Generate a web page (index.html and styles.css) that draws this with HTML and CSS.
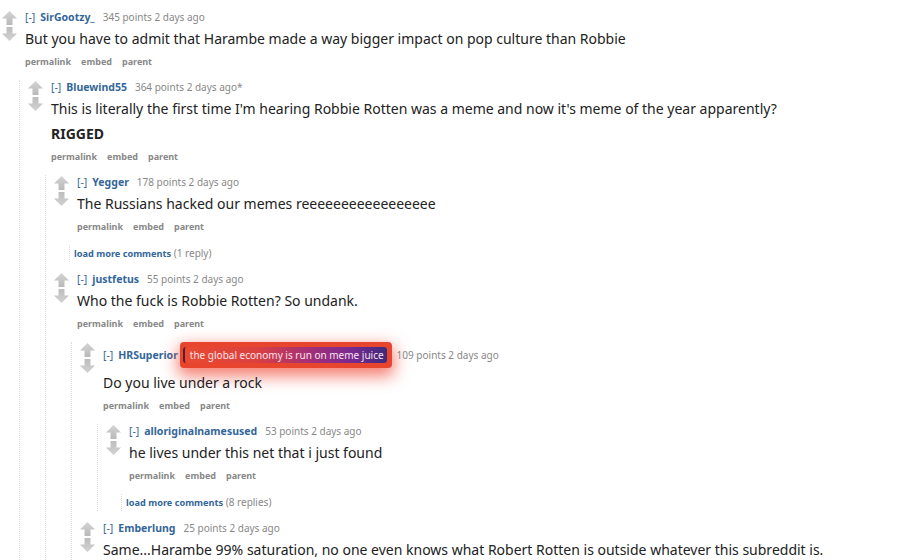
FILE: index.html
```html
<!DOCTYPE html>
<html>
<head>
<meta charset="utf-8">
<link rel="stylesheet" href="styles.css">
</head>
<body>
<svg class="defs" width="0" height="0" aria-hidden="true">
  <defs>
    <linearGradient id="gu" x1="0" y1="0" x2="0" y2="1">
      <stop offset="0" stop-color="#d4d4d4"/>
      <stop offset="1" stop-color="#b9b9b9"/>
    </linearGradient>
    <linearGradient id="gd" x1="0" y1="0" x2="0" y2="1">
      <stop offset="0" stop-color="#bdbdbd"/>
      <stop offset="1" stop-color="#d2d2d2"/>
    </linearGradient>
    <symbol id="up" viewBox="0 0 15 14"><polygon points="7.5,0 15,7.5 10.5,7.5 10.5,14 4.5,14 4.5,7.5 0,7.5" fill="url(#gu)"/></symbol>
    <symbol id="down" viewBox="0 0 15 14"><polygon points="4.5,0 10.5,0 10.5,6.5 15,6.5 7.5,14 0,6.5 4.5,6.5" fill="url(#gd)"/></symbol>
  </defs>
</svg>
<div class="page">
  <div class="comment">
    <div class="thing">
      <div class="midcol"><svg class="arrow"><use href="#up"/></svg><svg class="arrow"><use href="#down"/></svg></div>
      <div class="entry">
        <p class="tagline"><a class="expand">[-]</a><a class="author">SirGootzy_</a><span class="score">345 points 2 days ago</span></p>
        <div class="md"><p>But you have to admit that Harambe made a way bigger impact on pop culture than Robbie</p></div>
        <ul class="buttons"><li>permalink</li><li>embed</li><li>parent</li></ul>
      </div>
    </div>
    <div class="child">
      <div class="comment">
        <div class="thing">
          <div class="midcol"><svg class="arrow"><use href="#up"/></svg><svg class="arrow"><use href="#down"/></svg></div>
          <div class="entry">
            <p class="tagline"><a class="expand">[-]</a><a class="author">Bluewind55</a><span class="score">364 points 2 days ago*</span></p>
            <div class="md"><p>This is literally the first time I'm hearing Robbie Rotten was a meme and now it's meme of the year apparently?</p><p><strong>RIGGED</strong></p></div>
            <ul class="buttons"><li>permalink</li><li>embed</li><li>parent</li></ul>
          </div>
        </div>
        <div class="child">
          <div class="comment">
            <div class="thing">
              <div class="midcol"><svg class="arrow"><use href="#up"/></svg><svg class="arrow"><use href="#down"/></svg></div>
              <div class="entry">
                <p class="tagline"><a class="expand">[-]</a><a class="author">Yegger</a><span class="score">178 points 2 days ago</span></p>
                <div class="md"><p>The Russians hacked our memes reeeeeeeeeeeeeeeee</p></div>
                <ul class="buttons"><li>permalink</li><li>embed</li><li>parent</li></ul>
              </div>
            </div>
            <div class="more"><a class="morelink">load more comments</a> <span class="count">(1 reply)</span></div>
          </div>
          <div class="comment">
            <div class="thing">
              <div class="midcol"><svg class="arrow"><use href="#up"/></svg><svg class="arrow"><use href="#down"/></svg></div>
              <div class="entry">
                <p class="tagline"><a class="expand">[-]</a><a class="author">justfetus</a><span class="score">55 points 2 days ago</span></p>
                <div class="md"><p>Who the fuck is Robbie Rotten? So undank.</p></div>
                <ul class="buttons"><li>permalink</li><li>embed</li><li>parent</li></ul>
              </div>
            </div>
            <div class="child">
              <div class="comment">
                <div class="thing">
                  <div class="midcol"><svg class="arrow"><use href="#up"/></svg><svg class="arrow"><use href="#down"/></svg></div>
                  <div class="entry">
                    <p class="tagline"><a class="expand">[-]</a><a class="author">HRSuperior</a><span class="flair"><span class="flair-inner">the global economy is run on meme juice</span></span><span class="score">109 points 2 days ago</span></p>
                    <div class="md"><p>Do you live under a rock</p></div>
                    <ul class="buttons"><li>permalink</li><li>embed</li><li>parent</li></ul>
                  </div>
                </div>
                <div class="child">
                  <div class="comment">
                    <div class="thing">
                      <div class="midcol"><svg class="arrow"><use href="#up"/></svg><svg class="arrow"><use href="#down"/></svg></div>
                      <div class="entry">
                        <p class="tagline"><a class="expand">[-]</a><a class="author">alloriginalnamesused</a><span class="score">53 points 2 days ago</span></p>
                        <div class="md"><p>he lives under this net that i just found</p></div>
                        <ul class="buttons"><li>permalink</li><li>embed</li><li>parent</li></ul>
                      </div>
                    </div>
                    <div class="more"><a class="morelink">load more comments</a> <span class="count">(8 replies)</span></div>
                  </div>
                </div>
              </div>
              <div class="comment">
                <div class="thing">
                  <div class="midcol"><svg class="arrow"><use href="#up"/></svg><svg class="arrow"><use href="#down"/></svg></div>
                  <div class="entry">
                    <p class="tagline"><a class="expand">[-]</a><a class="author">Emberlung</a><span class="score">25 points 2 days ago</span></p>
                    <div class="md"><p>Same...Harambe 99% saturation, no one even knows what Robert Rotten is outside whatever this subreddit is.</p></div>
                  </div>
                </div>
              </div>
            </div>
          </div>
        </div>
      </div>
    </div>
  </div>
</div>
</body>
</html>
```

FILE: styles.css
```css
html, body {
  margin: 0;
  padding: 0;
  background: #ffffff;
  overflow: hidden;
}
body {
  font-family: "Comic Sans MS", "Noto Sans", sans-serif;
  color: #222222;
}
.defs {
  position: absolute;
  width: 0;
  height: 0;
}
.page {
  padding-top: 10px;
  height: 560px;
  overflow: hidden;
}
.thing {
  display: flex;
  margin-bottom: 11px;
}
.thing:last-child {
  margin-bottom: 10px;
}
.midcol {
  flex: none;
  width: 25px;
  display: flex;
  flex-direction: column;
  gap: 2px;
  padding-top: 1px;
}
.arrow {
  width: 15px;
  height: 14px;
  margin-left: 2px;
  display: block;
}
.entry {
  flex: 1;
  min-width: 0;
}
.tagline {
  margin: 0;
  display: flex;
  align-items: center;
  min-height: 14px;
  font-size: 10px;
  line-height: 14px;
  color: #888888;
  white-space: nowrap;
}
.expand {
  color: #336699;
  font-size: 10.5px;
  margin-right: 5px;
}
.author {
  color: #336699;
  font-weight: bold;
  font-size: 10.5px;
  margin-right: 8px;
}
.flair {
  display: inline-flex;
  align-items: center;
  height: 26px;
  padding: 0 5px 0 3px;
  margin: 0 5px 0 -6px;
  background: #e8452f;
  border-radius: 4px;
  box-shadow: 0 6px 16px 2px rgba(240, 70, 50, 0.7);
  font-size: 10px;
}
.flair-inner {
  padding: 1px 3px 1px 5px;
  border-left: 2px solid #5a1d34;
  border-radius: 3px;
  background: linear-gradient(90deg, #e94a30 0%, #db4040 35%, #a22f78 62%, #7a2a90 82%, #3c2b7c 100%);
  color: #fbe3ea;
  line-height: 14px;
}
.md p {
  margin: 5px 0 0;
  font-size: 14px;
  line-height: 20px;
}
.md strong {
  font-weight: bold;
}
.buttons {
  list-style: none;
  margin: 6px 0 0;
  padding: 0;
  display: flex;
  gap: 10px;
  font-size: 9px;
  line-height: 14px;
  font-weight: bold;
  color: #888888;
}
.child {
  margin-left: 19px;
  border-left: 1px dotted #dddddd;
  padding-left: 6px;
}
.more {
  margin: 2px 0 10px 17px;
  padding: 1px 0 1px 4px;
  border-left: 1px dotted #dddddd;
  font-size: 10px;
  line-height: 14px;
  color: #888888;
}
.morelink {
  color: #336699;
  font-weight: bold;
  font-size: 9.2px;
}
```
